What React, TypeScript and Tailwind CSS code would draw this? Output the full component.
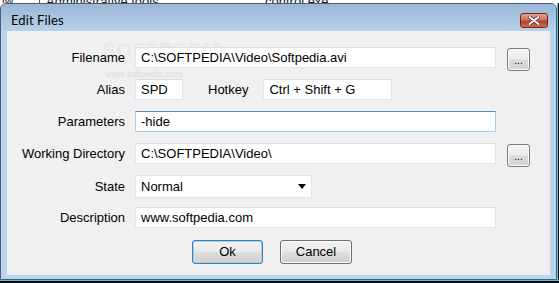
import React from "react";

function TextBox({ value, w, focused }: { value: string; w: string; focused?: boolean }) {
  return (
    <div
      className={`${w} h-[21px] flex items-center pl-[5px] bg-white border text-[13px] text-black whitespace-nowrap overflow-hidden ${
        focused ? "border-[#aacde9] border-t-[#5b8cb8]" : "border-[#e1e4e8] border-t-[#d9dce1]"
      }`}
    >
      {value}
    </div>
  );
}

function Browse() {
  return (
    <div className="ml-[11px] mt-[1px] w-[23px] h-[23px] rounded-[3px] border border-[#7a7a7a] bg-[linear-gradient(#f4f4f4,#ececec_45%,#dcdcdc_55%,#d2d2d2)] flex items-center justify-center text-[10px] leading-none pt-[3px] text-black shadow-[inset_0_0_0_1px_#fbfbfb]">
      ...
    </div>
  );
}

function Label({ text }: { text: string }) {
  return <div className="w-[120px] pr-[2px] text-right text-[13px] text-black shrink-0">{text}</div>;
}

export default function App() {
  return (
    <div className="w-[559px] h-[283px] overflow-hidden bg-white flex flex-col font-['Liberation_Sans',Arial,sans-serif]">
      {/* background window strip */}
      <div className="h-[3px] relative overflow-hidden bg-white text-[13px] text-[#222] shrink-0">
        <div className="absolute left-[39px] top-0 h-[3px] w-px bg-[#555]" />
        <div className="absolute left-[2px] top-[-8px] text-[12px]">lw</div>
        <div className="absolute left-[46px] top-[-8px]">Administrative tools</div>
        <div className="absolute left-[265px] top-[-8px]">control.exe</div>
      </div>

      <div className="flex h-[277px] shrink-0">
        {/* dialog */}
        <div className="relative w-[557px] h-[277px] border border-[#4b5d70] rounded-t-[6px] bg-[#bcd4ee] flex flex-col overflow-hidden">
          {/* title bar */}
          <div className="h-[27px] shrink-0 bg-[linear-gradient(#9bb7d7,#b9d1ea)] flex items-start justify-between pl-[10px] pr-[8px]">
            <div className="mt-[7px] text-[13px] text-black font-['Lato',sans-serif] tracking-[0.1px]">Edit Files</div>
            <div className="mt-[9px] w-[28px] h-[15px] rounded-[3px] border border-[#6e2a20] bg-[linear-gradient(#e2a293,#cf7260_45%,#b8402b_55%,#d06a54)] flex items-center justify-center">
              <svg width="12" height="9" viewBox="0 0 12 9">
                <path d="M1.5 1 L10.5 8 M10.5 1 L1.5 8" stroke="#5a2018" strokeWidth="3.4" strokeLinecap="round" />
                <path d="M1.5 1 L10.5 8 M10.5 1 L1.5 8" stroke="#ffffff" strokeWidth="2" strokeLinecap="round" />
              </svg>
            </div>
          </div>

          {/* client area */}
          <div className="mx-[6px] h-[244px] bg-[#f0f0f0] relative flex flex-col pt-[16px]">
            {/* watermark */}
            <div className="absolute left-[95px] top-[4px] text-[20px] tracking-[1px] text-[#e8e8e8] font-bold pointer-events-none">SOFTPEDIA</div>
            <div className="absolute left-[98px] top-[37px] text-[9px] text-[#dcdcdc] pointer-events-none">www.softpedia.com</div>

            {/* Filename */}
            <div className="relative flex items-start h-[21px]">
              <div className="h-[21px] flex items-center"><Label text="Filename" /></div>
              <div className="ml-[8px]"><TextBox value="C:\SOFTPEDIA\Video\Softpedia.avi" w="w-[361px]" /></div>
              <Browse />
            </div>

            {/* Alias / Hotkey */}
            <div className="relative flex items-center h-[21px] mt-[11px]">
              <Label text="Alias" />
              <div className="ml-[8px]"><TextBox value="SPD" w="w-[48px]" /></div>
              <div className="ml-[25px] text-[13px] text-black">Hotkey</div>
              <div className="ml-[15px]"><TextBox value="Ctrl + Shift + G" w="w-[129px]" /></div>
            </div>

            {/* Parameters */}
            <div className="relative flex items-center h-[21px] mt-[11px]">
              <Label text="Parameters" />
              <div className="ml-[8px]"><TextBox value="-hide" w="w-[361px]" focused /></div>
            </div>

            {/* Working directory */}
            <div className="relative flex items-start h-[21px] mt-[11px]">
              <div className="h-[21px] flex items-center"><Label text="Working Directory" /></div>
              <div className="ml-[8px]"><TextBox value="C:\SOFTPEDIA\Video\" w="w-[361px]" /></div>
              <Browse />
            </div>

            {/* State */}
            <div className="relative flex items-center h-[23px] mt-[11px]">
              <Label text="State" />
              <div className="ml-[8px] w-[177px] h-[23px] bg-white border border-[#e1e4e8] flex items-center justify-between pl-[5px] pr-[5px] text-[13px] text-black">
                <span>Normal</span>
                <svg width="8" height="5" viewBox="0 0 8 5">
                  <path d="M0 0 H8 L4 5 Z" fill="#000" />
                </svg>
              </div>
            </div>

            {/* Description */}
            <div className="relative flex items-center h-[21px] mt-[9px]">
              <Label text="Description" />
              <div className="ml-[8px]"><TextBox value="www.softpedia.com" w="w-[361px]" /></div>
            </div>

            {/* Buttons */}
            <div className="flex mt-[12px] pl-[185px] gap-[17px]">
              <div className="w-[71px] h-[24px] rounded-[3px] border border-[#3c7fb1] bg-[linear-gradient(#f2f2f2,#ebebeb_45%,#dddddd_55%,#cfcfcf)] flex items-center justify-center text-[13px] text-black shadow-[inset_0_0_0_1px_#9fd4f2]">
                Ok
              </div>
              <div className="w-[72px] h-[24px] rounded-[3px] border border-[#707070] bg-[linear-gradient(#f2f2f2,#ebebeb_45%,#dddddd_55%,#cfcfcf)] flex items-center justify-center text-[13px] text-black shadow-[inset_0_0_0_1px_#fbfbfb]">
                Cancel
              </div>
            </div>
          </div>
        </div>

        {/* background to the right */}
        <div className="w-px h-full bg-[#3cc8e8]" />
        <div className="w-px h-full bg-[#111]" />
      </div>

      <div className="h-px bg-[#3cc8e8] shrink-0" />
      <div className="h-[2px] bg-black shrink-0" />
    </div>
  );
}
